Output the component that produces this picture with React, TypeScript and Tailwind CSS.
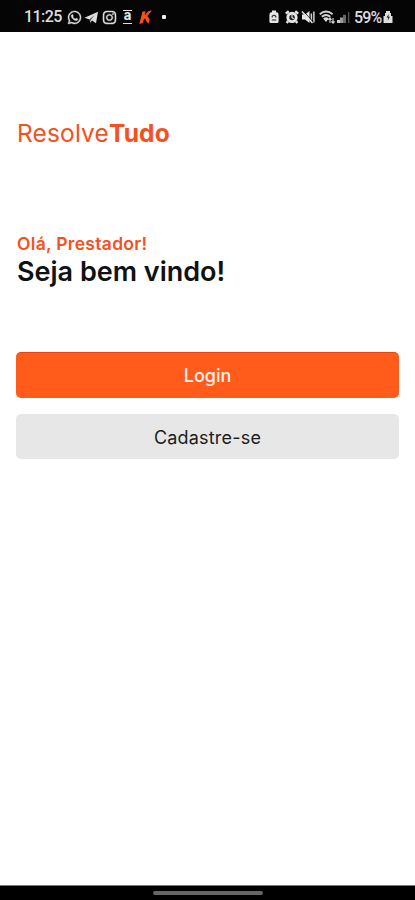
import React from "react";
import { FaWhatsapp, FaInstagram } from "react-icons/fa";

function TelegramIcon() {
  return (
    <svg className="ml-[2px] h-[15px] w-[15px]" viewBox="0 0 15 15" fill="#dedede">
      <path d="M.5 7.8 14 1.8 12 13.3 8.2 10.6 6.2 12.8 5.6 9.4z" />
      <path d="M5.6 9.3 10.8 4.9 6.7 9.8 6.2 12.3z" fill="#333" />
    </svg>
  );
}

function AmazonIcon() {
  return (
    <div className="ml-[6px] flex h-[14px] w-[9px] flex-col items-center justify-between border-y-[1.5px] border-[#dedede]">
      <span className="text-[13px] font-extrabold leading-[8px] text-[#dedede]">a</span>
    </div>
  );
}

function KabumIcon() {
  return (
    <svg className="ml-[7px] h-[15px] w-[13px]" viewBox="0 0 13 15" fill="#f4501e">
      <path d="M3.5 1.5 6.6 1.5 5.8 5.3 9.5 1 13 .5 8.3 6 10.8 9.2 9.5 13.8 7.5 11.5 6.2 8.5 4.8 9.5 4 13 .3 14z" />
    </svg>
  );
}

function BatterySaverIcon() {
  return (
    <svg className="h-[14px] w-[10px]" viewBox="0 0 10 14">
      <path d="M3 .5h4v1.7h1.2Q9.6 2.8 9.6 5v6.5Q9.6 13 8 13H2Q.4 13 .4 11.5V5q0-2.2 1.4-2.8H3z" fill="#e6e6e6" />
      <path d="M3.2 7.6V6.3Q5 4.3 6.8 6.3v1.3M2.8 10h4.4" stroke="#222" strokeWidth="1.1" fill="none" />
    </svg>
  );
}

function AlarmIcon() {
  return (
    <svg className="ml-[6px] h-[14px] w-[14px]" viewBox="0 0 14 14">
      <path d="M.8 3.6 3.8 1.2M13.2 3.6 10.2 1.2M3 11.2 1.7 13M11 11.2l1.3 1.8" stroke="#e6e6e6" strokeWidth="2.4" />
      <circle cx="7" cy="7.4" r="4.2" fill="#222" stroke="#e6e6e6" strokeWidth="2.9" />
      <path d="M7 5v2.7l1.8 1" stroke="#e6e6e6" strokeWidth="1.1" fill="none" />
    </svg>
  );
}

function MuteIcon() {
  return (
    <svg className="ml-[2px] h-[14px] w-[14px]" viewBox="0 0 14 14">
      <path d="M1 4.5h3L8.5 1v12L4 9.6H1z" fill="#e6e6e6" />
      <path d="M10.4 3.5v7M12.9 1.5v11" stroke="#d0d0d0" strokeWidth="1.5" />
      <path d="M2.3 1 12.3 12" stroke="#080808" strokeWidth="0.8" />
      <path d="M1 1.5 11.5 13" stroke="#e6e6e6" strokeWidth="1.5" />
    </svg>
  );
}

function WifiIcon() {
  return (
    <svg className="ml-[4px] h-[14px] w-[17px]" viewBox="0 0 17 14" fill="none">
      <path d="M.8 4.2Q7 -1 13.6 4.2M2.8 6.8Q7 3.2 11.3 6.8M4.8 9.2Q7 7.3 9.2 9.2" stroke="#d4d4d4" strokeWidth="1.9" />
      <path d="M4.8 9 7 12l2.2-3z" fill="#dedede" />
      <path d="M11 13V8.3M9.5 10 11 8l1.5 2M14 8v5M12.5 11.3 14 13.2l1.5-1.9" stroke="#dedede" strokeWidth="1.1" />
    </svg>
  );
}

function SignalIcon() {
  return (
    <svg className="ml-[1px] h-[14px] w-[14px]" viewBox="0 0 14 14">
      <path d="M0 10h3v3H0z" fill="#ccc" />
      <path d="M3 7.5h3V13H3z" fill="#999" />
      <path d="M6 4.8h3V13H6z" fill="#666" />
      <path d="M11 2h1.3v11h-1.3z" fill="#555" />
    </svg>
  );
}

function ChargingIcon() {
  return (
    <svg className="h-[14px] w-[10px]" viewBox="0 0 10 14">
      <path d="M3 1h4v2h1v3h1.5v7H.5V6H2V3h1z" fill="#dedede" />
      <path d="M5.8 4 3.4 7.6h1.8L4.6 10.7 7 6.8H5.3z" fill="#222" />
    </svg>
  );
}

function StatusBar() {
  return (
    <header className="flex h-8 items-center justify-between bg-[#050506] pl-[24px] pr-[22px] pt-[2px] text-[#dedede]">
      <div className="flex items-center">
        <span className="w-[43px] whitespace-nowrap font-['Roboto',sans-serif] text-[16px] font-medium leading-4 tracking-[-0.55px]">11:25</span>
        <FaWhatsapp className="h-[15px] w-[15px] stroke-current stroke-[14]" />
        <TelegramIcon />
        <FaInstagram className="ml-[3px] h-[15px] w-[15px] stroke-current stroke-[14]" />
        <AmazonIcon />
        <KabumIcon />
        <span className="ml-[10px] h-1 w-1 rounded-[1px] bg-[#eeeeee]" />
      </div>
      <div className="flex items-center">
        <BatterySaverIcon />
        <AlarmIcon />
        <MuteIcon />
        <WifiIcon />
        <SignalIcon />
        <span className="ml-[3px] w-[29px] whitespace-nowrap pt-px font-['Roboto',sans-serif] text-[16px] font-medium leading-4 tracking-[-0.8px]">59%</span>
        <ChargingIcon />
      </div>
    </header>
  );
}

export default function App() {
  return (
    <div className="flex h-[900px] w-full flex-col bg-white font-['Inter',sans-serif]">
      <StatusBar />
      <main className="flex flex-1 flex-col px-4">
        <div className="mt-[85px] whitespace-nowrap pl-px text-[24.5px] leading-8 tracking-[0.15px] text-[#f4511e]">
          Resolve<span className="font-bold">Tudo</span>
        </div>
        <div className="mt-[84px] pl-px text-[17.5px] font-semibold leading-[22px] tracking-[0.3px] text-[#f4511e]">Olá, Prestador!</div>
        <h1 className="mt-px pl-px text-[27px] font-semibold leading-8 text-[#111111]">Seja bem vindo!</h1>
        <div className="mt-[64px] flex flex-col gap-4">
          <button className="h-[46px] rounded-[5px] border-t border-[#e8450f] bg-[#ff5c1c] text-[18px] font-medium text-[#fff1e9]">Login</button>
          <button className="h-[45px] rounded-[5px] bg-[#e7e7e7] pt-px text-[18px] tracking-[0.2px] text-[#1c1c1c]">Cadastre-se</button>
        </div>
      </main>
      <footer className="flex h-[15px] justify-center border-t border-[#777777] bg-black pt-[5px]">
        <div className="h-[4px] w-[110px] rounded-full bg-[#666666]" />
      </footer>
    </div>
  );
}
